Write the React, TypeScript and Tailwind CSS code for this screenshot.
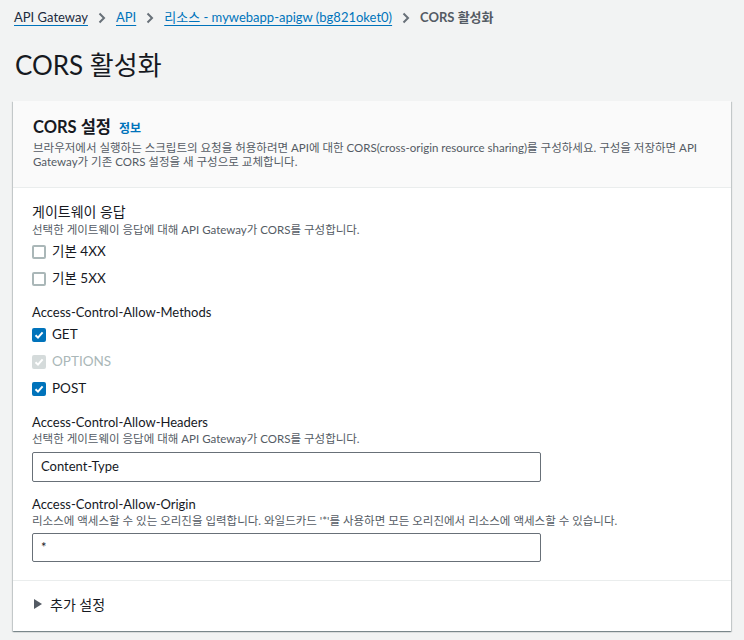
import React from "react";

const font = "font-['Lato','Noto_Sans_CJK_KR',sans-serif]";

function Chevron() {
  return (
    <svg width="8" height="12" viewBox="0 0 8 12" className="mx-[10px] shrink-0">
      <path d="M1.5 1.5 L6 6 L1.5 10.5" fill="none" stroke="#687078" strokeWidth="2" />
    </svg>
  );
}

function Checkbox({ checked, disabled, label }: { checked?: boolean; disabled?: boolean; label: string }) {
  const box = checked
    ? disabled
      ? "bg-[#d5dbdb] border-[#d5dbdb]"
      : "bg-[#0073bb] border-[#0073bb]"
    : "bg-white border-[#aab7b8]";
  return (
    <label className="flex h-[27px] items-center">
      <span className={`flex h-[14px] w-[14px] items-center justify-center rounded-[2px] border-2 ${box}`}>
        {checked && (
          <svg width="10" height="10" viewBox="0 0 10 10">
            <path d="M1.5 5.2 L4 7.6 L8.6 2.4" fill="none" stroke="white" strokeWidth="2" />
          </svg>
        )}
      </span>
      <span className={`ml-[6px] text-[13.5px] ${disabled ? "text-[#aab7b8]" : "text-[#16191f]"}`}>{label}</span>
    </label>
  );
}

export default function App() {
  return (
    <div className={`min-h-screen bg-[#f2f3f3] ${font}`}>
      {/* Breadcrumbs */}
      <nav className="flex h-[36px] items-center px-[14px] text-[13px]">
        <a className="text-[#1d2b3d] underline decoration-[#0073bb] underline-offset-[3px]">API Gateway</a>
        <Chevron />
        <a className="text-[#0073bb] underline underline-offset-[3px]">API</a>
        <Chevron />
        <a className="text-[#0073bb] underline underline-offset-[3px]">리소스 - mywebapp-apigw (bg821oket0)</a>
        <Chevron />
        <span className="font-bold text-[#545b64]">CORS 활성화</span>
      </nav>

      <h1 className="mt-[4px] h-[50px] px-[15px] text-[26px] leading-[50px] text-[#16191f]">CORS 활성화</h1>

      {/* Card */}
      <div className="mx-[13px] mt-[11px] bg-white shadow-[0_1px_1px_0_rgba(0,28,36,0.3),1px_1px_1px_0_rgba(0,28,36,0.15),-1px_1px_1px_0_rgba(0,28,36,0.15)]">
        <div className="border-b border-[#eaeded] bg-[#fafafa] px-[20px] pb-[18px] pt-[15px]">
          <div className="flex h-[22px] items-baseline leading-[22px]">
            <h2 className="text-[16.5px] font-bold text-[#16191f]">CORS 설정</h2>
            <a className="ml-[8px] text-[12px] font-bold text-[#0073bb]">정보</a>
          </div>
          <p className="mt-[3px] text-[11.5px] leading-[14px] text-[#545b64]">
            브라우저에서 실행하는 스크립트의 요청을 허용하려면 API에 대한 CORS(cross-origin resource sharing)를 구성하세요. 구성을 저장하면 API
            <br />
            Gateway가 기존 CORS 설정을 새 구성으로 교체합니다.
          </p>
        </div>

        <div className="px-[19px] pb-[18px] pt-[14px]">
          <div className="h-[20px] text-[14px] leading-[20px] text-[#16191f]">게이트웨이 응답</div>
          <div className="h-[16px] text-[11.5px] leading-[16px] text-[#545b64]">
            선택한 게이트웨이 응답에 대해 API Gateway가 CORS를 구성합니다.
          </div>
          <Checkbox label="기본 4XX" />
          <Checkbox label="기본 5XX" />

          <div className="mt-[11px] h-[18px] text-[13px] leading-[18px] text-[#16191f]">Access-Control-Allow-Methods</div>
          <Checkbox checked label="GET" />
          <Checkbox checked disabled label="OPTIONS" />
          <Checkbox checked label="POST" />

          <div className="mt-[11px] h-[18px] text-[13px] leading-[18px] text-[#16191f]">Access-Control-Allow-Headers</div>
          <div className="h-[16px] text-[11.5px] leading-[16px] text-[#545b64]">
            선택한 게이트웨이 응답에 대해 API Gateway가 CORS를 구성합니다.
          </div>
          <div className="mt-[5px] flex h-[30px] w-[509px] items-center rounded-[2px] border border-[#687078] px-[8px] text-[13px] text-[#16191f]">
            Content-Type
          </div>

          <div className="mt-[13px] h-[18px] text-[13px] leading-[18px] text-[#16191f]">Access-Control-Allow-Origin</div>
          <div className="h-[16px] text-[11.5px] leading-[16px] text-[#545b64]">
            리소스에 액세스할 수 있는 오리진을 입력합니다. 와일드카드 '*'를 사용하면 모든 오리진에서 리소스에 액세스할 수 있습니다.
          </div>
          <div className="mt-[4px] flex h-[29px] w-[509px] items-center rounded-[2px] border border-[#687078] px-[8px] text-[13px] text-[#16191f]">
            *
          </div>
        </div>

        <div className="flex h-[51px] items-center border-t border-[#eaeded] px-[21px] pb-[4px]">
          <svg width="8" height="10" viewBox="0 0 8 10">
            <path d="M0 0 L8 5 L0 10 Z" fill="#545b64" />
          </svg>
          <span className="ml-[8px] text-[14px] text-[#16191f]">추가 설정</span>
        </div>
      </div>
    </div>
  );
}
